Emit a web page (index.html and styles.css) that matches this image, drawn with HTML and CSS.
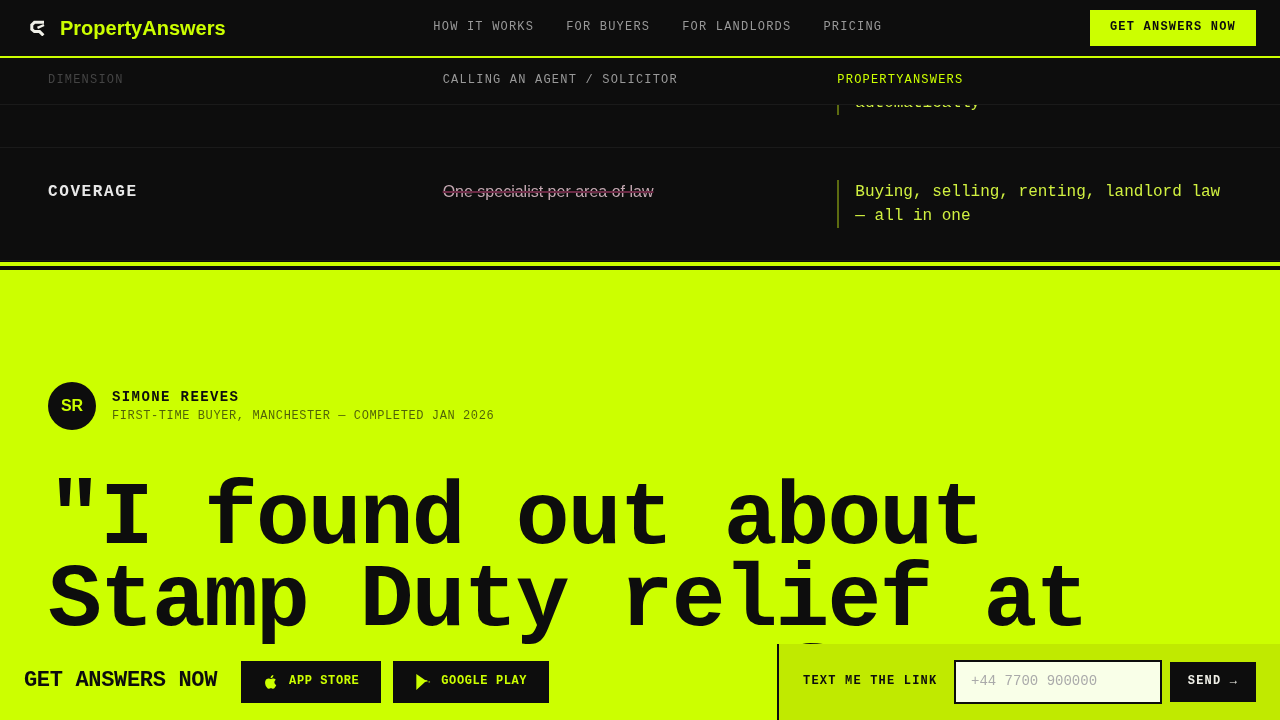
FILE: index.html
```html
<!DOCTYPE html>
<html lang="en">
<head>
    <meta charset="UTF-8">
    <meta name="viewport" content="width=device-width, initial-scale=1.0">
    <title>PropertyAnswers</title>
    <link rel="stylesheet" href="styles.css">
</head>
<body>
    <nav class="topnav">
        <a class="brand" href="#">
            <svg class="brand-icon" viewBox="0 0 16 16" aria-hidden="true">
                <path d="M14 2.2 H4.5 L1.8 4.8 V9.4 L4.4 11.6 H9.6 L13.4 15.4" fill="none" stroke="#f0f0e8" stroke-width="3"/>
                <path d="M14 5 L7.5 7.8" fill="none" stroke="#f0f0e8" stroke-width="2.4"/>
            </svg>
            <span>PropertyAnswers</span>
        </a>
        <div class="nav-links">
            <a href="#">HOW IT WORKS</a>
            <a href="#">FOR BUYERS</a>
            <a href="#">FOR LANDLORDS</a>
            <a href="#">PRICING</a>
        </div>
        <a class="nav-cta" href="#">GET ANSWERS NOW</a>
    </nav>

    <section class="compare">
        <div class="compare-head">
            <div class="head-dim">DIMENSION</div>
            <div class="head-old">CALLING AN AGENT / SOLICITOR</div>
            <div class="head-new">PROPERTYANSWERS</div>
        </div>
        <div class="compare-row row-cut">
            <div></div>
            <div></div>
            <div class="cell-new">automatically</div>
        </div>
        <div class="compare-row">
            <div class="cell-dim">COVERAGE</div>
            <div class="cell-old">One specialist per area of law</div>
            <div class="cell-new">Buying, selling, renting, landlord law — all in one</div>
        </div>
    </section>

    <section class="testimonial">
        <div class="person">
            <div class="avatar">SR</div>
            <div>
                <div class="person-name">SIMONE REEVES</div>
                <div class="person-role">FIRST-TIME BUYER, MANCHESTER — COMPLETED JAN 2026</div>
            </div>
        </div>
        <blockquote class="quote">"I found out about Stamp Duty relief at <span class="quote-rest">11pm, on my sofa.</span></blockquote>
    </section>

    <div class="cta-bar">
        <div class="cta-left">
            <div class="cta-title">GET ANSWERS NOW</div>
            <a class="store-btn" href="#">
                <svg viewBox="0 0 24 24" aria-hidden="true"><path d="M17.05 12.54c-.03-2.6 2.12-3.85 2.22-3.91-1.21-1.77-3.09-2.01-3.76-2.04-1.6-.16-3.12.94-3.93.94-.81 0-2.06-.92-3.39-.89-1.74.03-3.35 1.01-4.25 2.57-1.81 3.14-.46 7.8 1.3 10.35.86 1.25 1.89 2.65 3.24 2.6 1.3-.05 1.79-.84 3.36-.84 1.57 0 2.01.84 3.39.81 1.4-.02 2.29-1.27 3.14-2.53.99-1.45 1.4-2.86 1.42-2.93-.03-.01-2.72-1.04-2.74-4.13zM14.47 4.9c.72-.87 1.2-2.08 1.07-3.28-1.03.04-2.28.69-3.02 1.55-.66.77-1.24 2-1.09 3.18 1.15.09 2.33-.58 3.04-1.45z"/></svg>
                <span>APP STORE</span>
            </a>
            <a class="store-btn" href="#">
                <svg viewBox="0 0 24 24" aria-hidden="true"><path d="M2 0 L15 9 L18 9.5 L19.5 11 L15 12 L13 14 L2 24 Z"/><path d="M20.5 10.5 L23 12 L20.5 13 Z"/></svg>
                <span>GOOGLE PLAY</span>
            </a>
        </div>
        <form class="cta-right">
            <label class="sms-label" for="phone">TEXT ME THE LINK</label>
            <input class="sms-input" id="phone" type="tel" placeholder="+44 7700 900000">
            <button class="sms-btn" type="button">SEND →</button>
        </form>
    </div>
</body>
</html>
```

FILE: styles.css
```css
* {
    box-sizing: border-box;
}

body {
    margin: 0;
    height: 720px;
    overflow: hidden;
    position: relative;
    background: #0d0d0d;
    font-family: 'Liberation Mono', monospace;
}

a {
    text-decoration: none;
    color: inherit;
}

.topnav,
.compare,
.testimonial,
.cta-bar {
    will-change: transform;
}

.topnav {
    display: flex;
    justify-content: space-between;
    align-items: center;
    height: 58px;
    padding: 0 24px;
    background: #0d0d0d;
    border-bottom: 2px solid #ccff00;
}

.brand {
    display: flex;
    align-items: center;
    gap: 8px;
    color: #ccff00;
    font-family: 'Liberation Sans', sans-serif;
    font-size: 20px;
    font-weight: 700;
}

.brand-icon {
    width: 28px;
    height: 28px;
    padding: 6px;
}

.nav-links {
    display: flex;
    gap: 32px;
    margin-bottom: 2px;
    color: #999;
    font-size: 12px;
    letter-spacing: 0.1em;
}

.nav-cta {
    padding: 10px 20px 12px;
    background: #ccff00;
    color: #0d0d0d;
    font-size: 12px;
    line-height: 14px;
    font-weight: 700;
    letter-spacing: 0.1em;
}

.compare-head,
.compare-row {
    display: grid;
    grid-template-columns: repeat(3, 1fr);
    padding: 0 48px;
    border-bottom: 1px solid #1a1a1a;
}

.compare-head {
    height: 47px;
    padding-bottom: 3px;
    align-items: center;
    font-size: 12px;
    letter-spacing: 0.1em;
}

.head-dim {
    color: #444;
}

.head-old {
    color: #999;
}

.head-new {
    color: #ccff00;
}

.compare-row {
    padding-top: 32px;
    padding-bottom: 32px;
    align-items: start;
}

.row-cut {
    height: 43px;
    padding-top: 0;
    overflow: hidden;
    align-content: end;
}

.cell-dim {
    color: #e8e8e8;
    font-size: 16px;
    font-weight: 700;
    line-height: 24px;
    letter-spacing: 0.1em;
}

.cell-old {
    color: #c4a8b2;
    font-family: 'Liberation Sans', sans-serif;
    font-size: 16px;
    line-height: 24px;
    text-decoration: line-through;
    text-decoration-color: #6b2a45;
    text-decoration-thickness: 2px;
}

.cell-new {
    padding-left: 16px;
    border-left: 2px solid #5c6b10;
    color: #d0f040;
    font-size: 16px;
    line-height: 24px;
}

.compare {
    padding-bottom: 1px;
    border-bottom: 4px solid #ccff00;
}

.testimonial {
    height: 454px;
    padding: 112px 48px 0;
    background: #ccff00;
    border-top: 4px solid #0d0d0d;
    color: #0d0d0d;
}

.person {
    display: flex;
    align-items: center;
    gap: 16px;
}

.avatar {
    display: flex;
    justify-content: center;
    align-items: center;
    width: 48px;
    height: 48px;
    border-radius: 50%;
    background: #0d0d0d;
    color: #ccff00;
    font-family: 'Liberation Sans', sans-serif;
    font-size: 16px;
    font-weight: 700;
}

.person-name {
    margin-bottom: 2px;
    font-size: 14px;
    font-weight: 700;
    letter-spacing: 0.1em;
    line-height: 18px;
}

.person-role {
    font-size: 12px;
    letter-spacing: 0.05em;
    line-height: 16px;
    opacity: 0.65;
}

.quote {
    margin: 48px 0 0;
    font-size: 89.6px;
    font-weight: 700;
    line-height: 0.92;
    letter-spacing: -0.02em;
}

.quote-rest {
    display: block;
    margin-top: 1px;
}

.cta-bar {
    position: absolute;
    left: 0;
    right: 0;
    bottom: 0;
    display: flex;
    justify-content: space-between;
    height: 76px;
    background: #ccff00;
}

.cta-left {
    display: flex;
    align-items: center;
    gap: 12px;
    padding-left: 24px;
}

.cta-title {
    margin: 0 12px 3px 0;
    color: #0d0d0d;
    font-size: 22px;
    font-weight: 700;
    letter-spacing: -0.33px;
}

.store-btn {
    display: flex;
    align-items: center;
    gap: 10px;
    height: 42px;
    padding: 0 22px;
    background: #0d0d0d;
    color: #ccff00;
    font-size: 12px;
    font-weight: 700;
    letter-spacing: 0.05em;
}

.store-btn span {
    margin-bottom: 2px;
}

.store-btn svg {
    width: 16px;
    height: 16px;
    fill: #ccff00;
}

.cta-right {
    display: flex;
    align-items: center;
    width: 503px;
    margin: 0;
    padding: 0 24px;
    background: #c0ea00;
    border-left: 2px solid #0d0d0d;
}

.sms-label {
    margin: 0 16.6px 2px 0;
    color: #0d0d0d;
    font-size: 12px;
    font-weight: 700;
    letter-spacing: 0.1em;
}

.sms-input {
    width: 208px;
    height: 44px;
    margin-right: 8px;
    padding: 0 15px 2px;
    background: #f9ffe8;
    border: 2px solid #0d0d0d;
    border-radius: 0;
    outline: none;
    font-family: inherit;
    font-size: 14px;
}

.sms-input::placeholder {
    color: #aaa;
}

.sms-btn {
    width: 86px;
    height: 40px;
    padding: 0 0 2px;
    background: #0d0d0d;
    border: none;
    color: #f0f0e8;
    font-family: inherit;
    font-size: 12px;
    font-weight: 700;
    letter-spacing: 0.1em;
}
```
